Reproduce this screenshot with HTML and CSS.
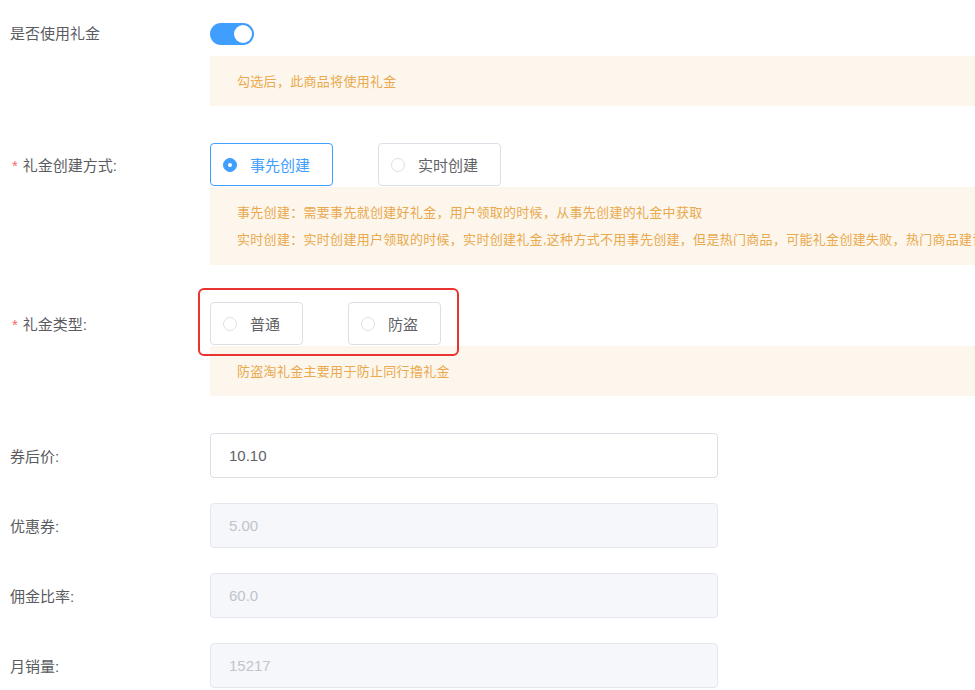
FILE: index.html
```html
<!DOCTYPE html>
<html lang="zh-CN">
<head>
    <meta charset="UTF-8">
    <meta name="viewport" content="width=device-width, initial-scale=1.0">
    <title>礼金设置</title>
    <link rel="stylesheet" href="styles.css">
</head>
<body>
    <div class="form">
        <div class="item first">
            <div class="row">
                <label class="label top">是否使用礼金</label>
                <span class="switch on"><span class="knob"></span></span>
            </div>
            <div class="tip gap">勾选后，此商品将使用礼金</div>
        </div>

        <div class="item">
            <div class="row">
                <label class="label"><span class="req">*</span>礼金创建方式:</label>
                <div class="radios">
                    <span class="radio checked"><span class="dot"></span>事先创建</span>
                    <span class="radio"><span class="dot"></span>实时创建</span>
                </div>
            </div>
            <div class="tip two">
                <p>事先创建：需要事先就创建好礼金，用户领取的时候，从事先创建的礼金中获取</p>
                <p>实时创建：实时创建用户领取的时候，实时创建礼金,这种方式不用事先创建，但是热门商品，可能礼金创建失败，热门商品建议事先创建</p>
            </div>
        </div>

        <div class="item">
            <div class="row">
                <label class="label"><span class="req">*</span>礼金类型:</label>
                <div class="radios marked">
                    <span class="radio"><span class="dot"></span>普通</span>
                    <span class="radio"><span class="dot"></span>防盗</span>
                    <span class="mark"></span>
                </div>
            </div>
            <div class="tip">防盗淘礼金主要用于防止同行撸礼金</div>
        </div>

        <div class="field">
            <label class="label">券后价:</label>
            <input class="input" type="text" value="10.10">
        </div>
        <div class="field">
            <label class="label">优惠券:</label>
            <input class="input" type="text" value="5.00" disabled>
        </div>
        <div class="field">
            <label class="label">佣金比率:</label>
            <input class="input" type="text" value="60.0" disabled>
        </div>
        <div class="field">
            <label class="label">月销量:</label>
            <input class="input" type="text" value="15217" disabled>
        </div>
    </div>
</body>
</html>
```

FILE: styles.css
```css
* {
    margin: 0;
    box-sizing: border-box;
    font-family: "Helvetica Neue", "Liberation Sans", "Noto Sans CJK SC", sans-serif;
}
body {
    background-color: #fff;
    overflow: hidden;
}
.form {
    padding-top: 23px;
}
.item {
    margin-bottom: 37px;
}
.row {
    display: flex;
    align-items: center;
}
.label {
    width: 210px;
    flex-shrink: 0;
    padding-left: 10px;
    font-size: 15px;
    color: #5a5c61;
}
.label.top {
    margin-top: -3px;
}
.req {
    color: #f56c6c;
    margin: 0 5px 0 2px;
}
.switch {
    display: inline-block;
    width: 44px;
    height: 22px;
    border-radius: 11px;
    background-color: #dcdfe6;
    position: relative;
}
.switch.on {
    background-color: #409eff;
}
.knob {
    position: absolute;
    top: 2px;
    left: 2px;
    width: 18px;
    height: 18px;
    border-radius: 50%;
    background-color: #fff;
}
.switch.on .knob {
    left: 24px;
}
.tip {
    margin: 1px 0 0 210px;
    padding: 12px 0 11px 27px;
    background-color: #fdf6ec;
    color: #e9a94e;
    font-size: 13px;
    line-height: 27px;
    letter-spacing: 0.3px;
    white-space: nowrap;
    overflow: hidden;
}
.tip.two {
    padding-bottom: 12px;
}
.tip.gap {
    margin-top: 11px;
}
.radios {
    display: flex;
    gap: 45px;
    position: relative;
}
.radio {
    display: flex;
    align-items: center;
    height: 43px;
    padding: 0 22px 0 12px;
    border: 1px solid #dcdfe6;
    border-radius: 4px;
    font-size: 15px;
    color: #606266;
    background-color: #fff;
}
.dot {
    width: 14px;
    height: 14px;
    border: 1px solid #dcdfe6;
    border-radius: 50%;
    margin-right: 13px;
    background-color: #fff;
    position: relative;
}
.radio.checked {
    border-color: #409eff;
    color: #409eff;
}
.radio.checked .dot {
    border-color: #409eff;
    background-color: #409eff;
}
.radio.checked .dot::after {
    content: "";
    position: absolute;
    top: 50%;
    left: 50%;
    width: 4px;
    height: 4px;
    margin: -2px 0 0 -2px;
    border-radius: 50%;
    background-color: #fff;
}
.mark {
    position: absolute;
    top: -14px;
    left: -12px;
    right: -18px;
    bottom: -11px;
    border: 2px solid #e8342f;
    border-radius: 6px;
    z-index: 2;
}
.field {
    display: flex;
    align-items: center;
    margin-bottom: 25px;
}
.input {
    width: 508px;
    height: 45px;
    padding: 0 18px;
    border: 1px solid #dcdfe6;
    border-radius: 4px;
    font-size: 15px;
    color: #606266;
    background-color: #fff;
    outline: none;
}
.input:disabled {
    background-color: #f5f7fa;
    border-color: #e4e7ed;
    color: #c0c4cc;
}
```
